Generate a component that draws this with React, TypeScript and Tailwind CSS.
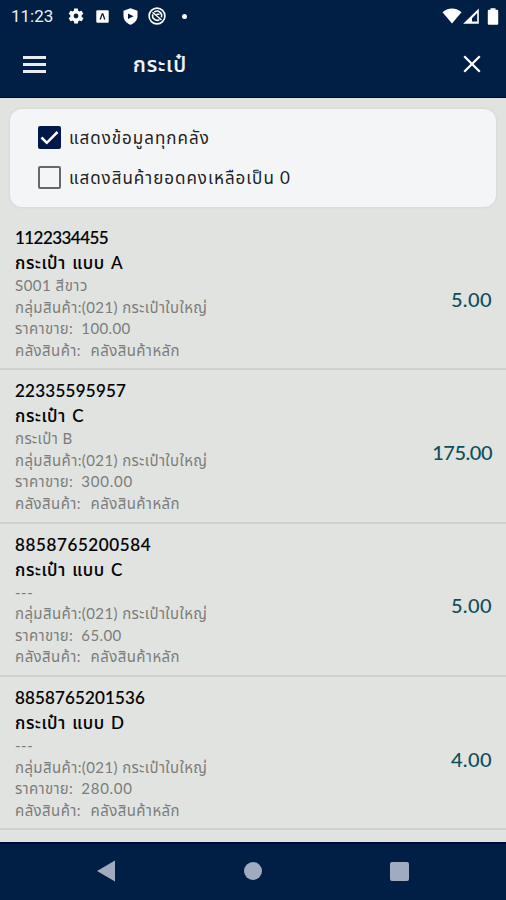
import React from 'react';

type Item = {
  code: string;
  codeClass: string;
  name: string;
  detail: string;
  detailClass: string;
  price: string;
  priceClass: string;
  qty: string;
  qtyClass: string;
};

const items: Item[] = [
  {
    code: '1122334455',
    codeClass: 'tracking-[-0.55px]',
    name: 'กระเป๋า แบบ A',
    detail: 'S001 สีขาว',
    detailClass: 'tracking-[0.5px]',
    price: '100.00',
    priceClass: 'tracking-[0.35px]',
    qty: '5.00',
    qtyClass: 'tracking-[0.4px]',
  },
  {
    code: '22335595957',
    codeClass: 'tracking-[0.25px]',
    name: 'กระเป๋า C',
    detail: 'กระเป๋า B',
    detailClass: 'tracking-[0.4px]',
    price: '300.00',
    priceClass: 'tracking-[0.75px]',
    qty: '175.00',
    qtyClass: 'tracking-[-0.5px]',
  },
  {
    code: '8858765200584',
    codeClass: 'tracking-[0.62px]',
    name: 'กระเป๋า แบบ C',
    detail: '---',
    detailClass: 'tracking-[0.5px]',
    price: '65.00',
    priceClass: 'tracking-[0.4px]',
    qty: '5.00',
    qtyClass: 'tracking-[0.4px]',
  },
  {
    code: '8858765201536',
    codeClass: 'tracking-[0.15px]',
    name: 'กระเป๋า แบบ D',
    detail: '---',
    detailClass: 'tracking-[0.5px]',
    price: '280.00',
    priceClass: 'tracking-[0.7px]',
    qty: '4.00',
    qtyClass: 'tracking-[0.4px]',
  },
];

const StatusBar: React.FC = () => (
  <div className="flex h-8 items-center justify-between pl-[11px] pr-[7px] text-white">
    <div className="flex items-center">
      <span className="w-[56px] font-['Roboto'] text-[17px] leading-8 text-[#eceff4]">11:23</span>
      <svg className="h-[18px] w-[18px]" viewBox="0 0 24 24" fill="currentColor">
        <path d="M19.4 13c0-.3.1-.6.1-1s0-.7-.1-1l2.1-1.7c.2-.2.3-.4.1-.6l-2-3.5c-.1-.2-.4-.3-.6-.2l-2.5 1c-.5-.4-1.1-.7-1.7-1l-.4-2.6c0-.2-.2-.4-.5-.4h-4c-.2 0-.5.2-.5.4L9.2 5c-.6.3-1.2.6-1.7 1L5 5c-.2-.1-.5 0-.6.2l-2 3.5c-.1.2-.1.5.1.6L4.6 11c0 .3-.1.6-.1 1s0 .7.1 1l-2.1 1.7c-.2.1-.2.4-.1.6l2 3.5c.1.2.4.3.6.2l2.5-1c.5.4 1.1.7 1.7 1l.4 2.6c0 .2.2.4.5.4h4c.2 0 .5-.2.5-.4l.4-2.6c.6-.3 1.2-.6 1.7-1l2.5 1c.2.1.5 0 .6-.2l2-3.5c.1-.2.1-.5-.1-.6L19.4 13zM12 15.2a3.2 3.2 0 1 1 0-6.4 3.2 3.2 0 0 1 0 6.4z" />
      </svg>
      <svg className="ml-[11px] h-[13px] w-[13px]" viewBox="0 0 13 13">
        <rect x="0.3" y="0.3" width="12.4" height="12.4" rx="1" fill="currentColor" />
        <path d="M4.2 9.5L6.2 3.8h.6L8.8 9.5" fill="none" stroke="#011f44" strokeWidth="1.3" />
      </svg>
      <svg className="ml-[14px] h-[17px] w-[15px]" viewBox="0 0 15 17">
        <path d="M7.5 0.2L14.5 2.8V8c0 4-3 7.3-7 8.8C3.5 15.3.5 12 .5 8V2.8z" fill="currentColor" />
        <path d="M5 5.4L10.6 8.2 5 11z" fill="#011f44" />
      </svg>
      <svg className="ml-[10px] h-[18px] w-[18px]" viewBox="0 0 18 18" fill="none" stroke="currentColor">
        <circle cx="9" cy="9" r="7.9" strokeWidth="1.6" />
        <path d="M4.8 7.2a4.6 4.6 0 0 0 6.7 5.4M6.3 5a4.6 4.6 0 0 1 7 5.4" strokeWidth="1.6" />
        <path d="M4.5 5.2L13.5 13M8.5 7.3h3" strokeWidth="1.5" />
      </svg>
      <span className="ml-[16px] h-[5px] w-[5px] rounded-full bg-white" />
    </div>
    <div className="flex items-center">
      <svg className="h-4 w-[20px]" viewBox="0 0 20 16" fill="currentColor">
        <path d="M10 15.5L0.5 4.3C3 2 6.3 .6 10 .6s7 1.4 9.5 3.7z" />
      </svg>
      <svg className="ml-[1px] h-4 w-4" viewBox="0 0 16 16" fill="currentColor">
        <path fillRule="evenodd" d="M15.8 0.5V15.8H0.2zM14.2 5L9 10.2V13.4H14.2z" />
      </svg>
      <svg className="ml-[8px] h-[17px] w-[12px]" viewBox="0 0 12 17" fill="currentColor">
        <path d="M3.5 0.2h5v1.6H10.2a1 1 0 0 1 1 1V15.8a1 1 0 0 1-1 1H1.8a1 1 0 0 1-1-1V2.8a1 1 0 0 1 1-1H3.5z" />
      </svg>
    </div>
  </div>
);

const AppBar: React.FC = () => (
  <div className="flex h-[64px] items-center pl-[23px] pr-[25px]">
    <button className="flex w-[23px] flex-col gap-[4px]" aria-label="menu">
      <span className="h-[3px] bg-[#e8ebf0]" />
      <span className="h-[3px] bg-[#e8ebf0]" />
      <span className="h-[3px] bg-[#e8ebf0]" />
    </button>
    <h1 className="ml-[87px] flex-1 pb-[2px] text-[21px] font-medium leading-[59px] tracking-[0.9px] text-[#f4f6f9] [-webkit-text-stroke:0.2px]">กระเป๋</h1>
    <svg className="h-[18px] w-[18px]" viewBox="0 0 18 18" fill="none" stroke="white" strokeWidth="2.3">
      <path d="M1.2 1.2L16.8 16.8M16.8 1.2L1.2 16.8" />
    </svg>
  </div>
);

const FilterCard: React.FC = () => (
  <section className="mx-[10px] mt-[11px] flex h-[98px] flex-col gap-[1px] rounded-[12px] bg-[#f4f5f7] pl-[28px] pt-[9px] text-[17px] text-[#222] shadow-[0_0_3px_#cdd0ce]">
    <label className="flex h-[39px] items-center">
      <span className="flex h-[23px] w-[23px] items-center justify-center rounded-[2px] bg-[#02174a]">
        <svg className="h-[17px] w-[19px]" viewBox="0 0 19 17" fill="none" stroke="white" strokeWidth="2.5">
          <path d="M1.5 8.5L6.8 13.8L17.5 3" />
        </svg>
      </span>
      <span className="ml-[8px] pt-[1px] tracking-[1px]">แสดงข้อมูลทุกคลัง</span>
    </label>
    <label className="flex h-[39px] items-center">
      <span className="h-[23px] w-[23px] rounded-[2px] border-2 border-[#66676b]" />
      <span className="ml-[8px] pt-[1px] tracking-[0.98px]">แสดงสินค้ายอดคงเหลือเป็น 0</span>
    </label>
  </section>
);

const ItemRow: React.FC<{ item: Item }> = ({ item }) => (
  <li className="flex h-[153.3px] items-center justify-between border-b-2 border-[#cfd1cf] pl-[15px] pr-[14px]">
    <div className="flex flex-col whitespace-pre pt-[1px] text-[15px] text-[#7b7d7c]">
      <span className={`h-[25px] text-[17px] font-medium leading-[25px] text-black [-webkit-text-stroke:0.15px] ${item.codeClass}`}>{item.code}</span>
      <span className="h-[25px] text-[17px] font-medium leading-[25px] tracking-[0.6px] text-black [-webkit-text-stroke:0.1px] [word-spacing:1.5px]">{item.name}</span>
      <span className={`h-[21.5px] leading-[21px] ${item.detailClass}`}>{item.detail}</span>
      <span className="h-[21.5px] leading-[21px] tracking-[0.4px]">กลุ่มสินค้า:(021) กระเป๋าใบใหญ่</span>
      <span className="h-[21.5px] leading-[21px] tracking-[0.3px]">
        {'ราคาขาย:  '}
        <span className={item.priceClass}>{item.price}</span>
      </span>
      <span className="h-[21.5px] leading-[21px] tracking-[0.42px] [word-spacing:0.5px]">{'คลังสินค้า:  คลังสินค้าหลัก'}</span>
    </div>
    <span className={`pt-[12px] text-[20px] font-medium text-[#0e4f5c] ${item.qtyClass}`}>{item.qty}</span>
  </li>
);

const NavBar: React.FC = () => (
  <nav className="flex h-[58px] items-center justify-between border-t-2 border-[#01083a] bg-[#011f44] px-[97px] pb-[2px] text-[#a0abbf]">
    <svg className="h-[22px] w-[18px]" viewBox="0 0 18 22" fill="currentColor">
      <path d="M0 11L18 0.5V21.5z" />
    </svg>
    <span className="ml-[1px] h-[18px] w-[18px] rounded-full bg-[#a0abbf]" />
    <span className="h-[19px] w-[19px] rounded-[2px] bg-[#a0abbf]" />
  </nav>
);

const App: React.FC = () => (
  <div className="flex h-[900px] w-[506px] flex-col overflow-hidden bg-[#e1e3e0] font-['Lato','Noto_Sans_Thai','Noto_Sans',sans-serif]">
    <header className="h-[98px] border-b border-[#000a1c] bg-[#011f44] text-white">
      <StatusBar />
      <AppBar />
    </header>
    <FilterCard />
    <ul className="mt-[10px] h-[625px] shrink-0 overflow-hidden">
      {items.map((item) => (
        <ItemRow key={item.code} item={item} />
      ))}
    </ul>
    <NavBar />
  </div>
);

export default App;
